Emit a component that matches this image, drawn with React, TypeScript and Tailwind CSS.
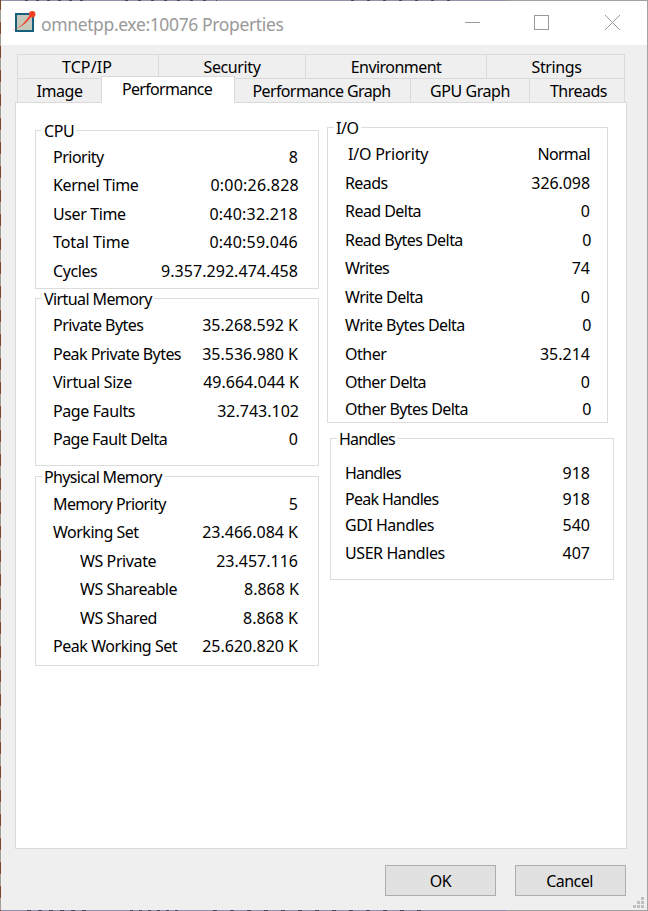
type RowData = { label: string; value: string; row?: string; labelClass?: string; valueClass?: string };

function Row({ label, value, row = "h-[28.5px]", labelClass = "", valueClass = "tracking-[0px]" }: RowData) {
  return (
    <div className={`flex shrink-0 items-center justify-between whitespace-nowrap ${row}`}>
      <span className={labelClass}>{label}</span>
      <span className={valueClass}>{value}</span>
    </div>
  );
}

type GroupProps = { title: string; box: string; rows: RowData[]; body: string; titleClass?: string };

function Group({ title, box, rows, body, titleClass = "" }: GroupProps) {
  return (
    <section className={`flex flex-col border border-[#dcdcdc] ${box}`}>
      <h2 className={`-mt-[8px] mb-[3px] ml-[6px] h-[16px] self-start bg-white px-[2px] leading-[16px] ${titleClass}`}>{title}</h2>
      <div className={`flex flex-col ${body}`}>
        {rows.map((r) => (
          <Row key={r.label} {...r} />
        ))}
      </div>
    </section>
  );
}

const cpu: RowData[] = [
  { label: "Priority", value: "8", labelClass: "tracking-[-0.5px]" },
  { label: "Kernel Time", value: "0:00:26.828", valueClass: "-mr-px tracking-[0.22px]" },
  { label: "User Time", value: "0:40:32.218", valueClass: "tracking-[0.22px]" },
  { label: "Total Time", value: "0:40:59.046", labelClass: "tracking-[-0.1px]", valueClass: "tracking-[0.22px]" },
  { label: "Cycles", value: "9.357.292.474.458", valueClass: "tracking-[0.05px]" },
];
const virtualMemory: RowData[] = [
  { label: "Private Bytes", value: "35.268.592 K", labelClass: "tracking-[-0.55px]" },
  { label: "Peak Private Bytes", value: "35.536.980 K", labelClass: "tracking-[-0.55px]" },
  { label: "Virtual Size", value: "49.664.044 K", labelClass: "tracking-[-0.32px]", valueClass: "-mr-px tracking-[0px]" },
  { label: "Page Faults", value: "32.743.102", valueClass: "-mr-px tracking-[0px]" },
  { label: "Page Fault Delta", value: "0", labelClass: "tracking-[-0.52px]" },
];
const physicalMemory: RowData[] = [
  { label: "Memory Priority", value: "5", labelClass: "tracking-[-0.6px]" },
  { label: "Working Set", value: "23.466.084 K", labelClass: "tracking-[-0.5px]" },
  { label: "WS Private", value: "23.457.116", labelClass: "ml-[27px]" },
  { label: "WS Shareable", value: "8.868 K", labelClass: "ml-[27px] tracking-[-0.48px]", valueClass: "-mr-px tracking-[0px]" },
  { label: "WS Shared", value: "8.868 K", labelClass: "ml-[27px]" },
  { label: "Peak Working Set", value: "25.620.820 K", labelClass: "tracking-[-0.45px]" },
];
const io: RowData[] = [
  { label: "I/O Priority", value: "Normal", labelClass: "ml-[3px] tracking-[-0.22px]", valueClass: "tracking-[-0.65px]" },
  { label: "Reads", value: "326.098", labelClass: "tracking-[-0.6px]", valueClass: "tracking-[-0.08px]" },
  { label: "Read Delta", value: "0", labelClass: "tracking-[-0.55px]" },
  { label: "Read Bytes Delta", value: "0", labelClass: "tracking-[-0.56px]", valueClass: "-mr-px" },
  { label: "Writes", value: "74", labelClass: "tracking-[-0.65px]" },
  { label: "Write Delta", value: "0", labelClass: "tracking-[-0.55px]" },
  { label: "Write Bytes Delta", value: "0", labelClass: "tracking-[-0.56px]", valueClass: "-mr-px" },
  { label: "Other", value: "35.214", labelClass: "tracking-[-0.5px]" },
  { label: "Other Delta", value: "0", labelClass: "tracking-[-0.6px]" },
  { label: "Other Bytes Delta", value: "0", row: "h-[25px]", labelClass: "tracking-[-0.58px]", valueClass: "-mr-px" },
];
const handles: RowData[] = [
  { label: "Handles", value: "918", row: "h-[26px]", labelClass: "tracking-[-0.8px]" },
  { label: "Peak Handles", value: "918", row: "h-[26px]", labelClass: "tracking-[-0.7px]" },
  { label: "GDI Handles", value: "540", row: "h-[26px]", labelClass: "tracking-[-0.48px]" },
  { label: "USER Handles", value: "407", row: "h-[30px]", labelClass: "tracking-[-0.42px]" },
];

const backTabs = [
  { name: "TCP/IP", width: "w-[141px] pr-[2px] tracking-[0.1px]" },
  { name: "Security", width: "w-[147px]" },
  { name: "Environment", width: "w-[181px] tracking-[-0.55px]" },
  { name: "Strings", width: "w-[138px] pl-[2px]" },
];

function AppIcon() {
  return (
    <svg width="24" height="24" viewBox="0 0 24 24" className="ml-[12px] mt-[9px] shrink-0">
      <rect x="3" y="4" width="17" height="17" fill="#c5c8bb" stroke="#15607d" strokeWidth="2" />
      <path d="M3.5 18.5C9 15.5 12 11.5 16.5 5.5L18 7C14 12.5 9.5 16 3.5 18.5Z" fill="#f04124" />
      <path d="M0 20L4 18" stroke="#f04124" strokeOpacity="0.3" />
      <circle cx="19.2" cy="4.2" r="3.2" fill="#f04124" />
    </svg>
  );
}

export default function App() {
  return (
    <div className="flex h-[911px] w-[648px] bg-[#efefef] font-['Noto_Sans',sans-serif] text-[16px] tracking-[-0.4px] text-black">
      <div className="w-px shrink-0 bg-[repeating-linear-gradient(to_bottom,#7d452b_0_10px,#ab9c9c_10px_22px,#7d452b_22px_24px)]" />
      <div className="flex w-[647px] flex-col border-r border-[#a3a3a3]">
        <div className="flex h-px shrink-0">
          <div className="w-[24px] bg-[#9390ad]" />
          <div className="w-[62px] bg-[repeating-linear-gradient(to_right,#494558_0_3px,#9390ad_3px_11px)]" />
          <div className="w-[38px] bg-[#9390ad]" />
          <div className="w-[92px] bg-[repeating-linear-gradient(to_right,#494558_0_3px,#9390ad_3px_13px)]" />
          <div className="w-[134px] bg-[#9390ad]" />
          <div className="w-[110px] bg-[repeating-linear-gradient(to_right,#494558_0_3px,#9390ad_3px_16px)]" />
          <div className="w-[45px] bg-[#9390ad]" />
          <div className="grow bg-[#a0a0a0]" />
        </div>
        <header className="flex h-[44px] shrink-0 bg-white text-[#999999]">
          <AppIcon />
          <h1 className="ml-[4px] mt-[10px] text-[17.5px] leading-[26px] tracking-[-0.37px]">omnetpp.exe:10076 Properties</h1>
          <svg width="158" height="18" viewBox="0 0 158 18" className="ml-auto mr-[25px] mt-[13px]" fill="none" stroke="#999999" shapeRendering="crispEdges">
            <path d="M1 8.5H16" />
            <path d="M70.5 1.5H84.5V15.5H70.5Z" />
            <path d="M141 1L156 16M156 1L141 16" shapeRendering="auto" />
          </svg>
        </header>

        <nav className="mt-[9px] flex flex-col pl-[16px]">
          <div className="flex h-[24px] w-[608px] border-l border-t border-[#dadada]">
            {backTabs.map((t) => (
              <div key={t.name} className={`shrink-0 border-r border-[#dadada] text-center leading-[25px] ${t.width}`}>{t.name}</div>
            ))}
          </div>
          <div className="flex h-[25px] w-[608px] items-end text-center leading-[24px]">
            <div className="h-[25px] w-[84px] border-l border-t border-[#dadada]">Image</div>
            <div className="relative z-10 -mt-[2px] h-[27px] w-[134px] border-x border-t border-[#dadada] bg-white pr-[2px] tracking-[-0.7px]">Performance</div>
            <div className="h-[25px] w-[176px] border-r border-t border-[#dadada] pr-[2px] tracking-[-0.6px]">Performance Graph</div>
            <div className="h-[25px] w-[119px] border-r border-t border-[#dadada] tracking-[-0.45px]">GPU Graph</div>
            <div className="h-[25px] w-[95px] border-r border-t border-[#dadada] pl-[3px] tracking-[-0.5px]">Threads</div>
          </div>
        </nav>

        <main className="-mt-px ml-[14px] flex h-[747px] w-[612px] items-start border border-[#dadada] bg-white">
          <div className="ml-[19px] mt-[27px] flex w-[284px] flex-col">
            <Group title="CPU" rows={cpu} box="h-[159px]" body="pl-[17px] pr-[20px] pt-[0.4px]" />
            <Group title="Virtual Memory" titleClass="tracking-[-0.6px]" rows={virtualMemory} box="mt-[9px] h-[168px]" body="pl-[17px] pr-[20px] pt-[1px]" />
            <Group title="Physical Memory" titleClass="tracking-[-0.65px]" rows={physicalMemory} box="mt-[10px] h-[190px]" body="pl-[17px] pr-[20px] pt-[1.4px]" />
          </div>
          <div className="ml-[8px] mt-[24px] flex w-[287px] flex-col">
            <Group title="I/O" rows={io} box="h-[296px] w-[281px]" body="pl-[17px] pr-[17px] pt-[1px]" />
            <Group title="Handles" titleClass="tracking-[-0.8px]" rows={handles} box="ml-[3px] mt-[15px] h-[142px] w-[284px]" body="pl-[14px] pr-[23px] pt-[10px]" />
          </div>
        </main>

        <footer className="mt-[16px] flex h-[45px] shrink-0 pl-[384px]">
          <button className="h-[31px] w-[111px] border border-[#adadad] bg-[#e1e1e1]">OK</button>
          <button className="ml-[19px] h-[31px] w-[111px] border border-[#adadad] bg-[#e1e1e1] pr-[2px] tracking-[-0.55px]">Cancel</button>
          <svg width="12" height="12" viewBox="0 0 12 12" fill="#bfbfbf" className="ml-auto mr-[2px] mt-[32px]" shapeRendering="crispEdges">
            <path d="M8 0h3v3h-3zM4 4h3v3h-3zM8 4h3v3h-3zM0 8h3v3h-3zM4 8h3v3h-3zM8 8h3v3h-3z" />
          </svg>
        </footer>
        <div className="flex h-px shrink-0">
          <div className="w-[26px] bg-[#9390ad]" />
          <div className="w-[62px] bg-[repeating-linear-gradient(to_right,#494558_0_4px,#9390ad_4px_11px)]" />
          <div className="w-[41px] bg-[#9390ad]" />
          <div className="w-[50px] bg-[repeating-linear-gradient(to_right,#494558_0_3px,#9390ad_3px_9px)]" />
          <div className="w-[33px] bg-[#9390ad]" />
          <div className="w-[220px] bg-[repeating-linear-gradient(to_right,#494558_0_4px,#9390ad_4px_17px)]" />
          <div className="w-[73px] bg-[#9390ad]" />
          <div className="grow bg-[#a0a0a0]" />
        </div>
      </div>
    </div>
  );
}
